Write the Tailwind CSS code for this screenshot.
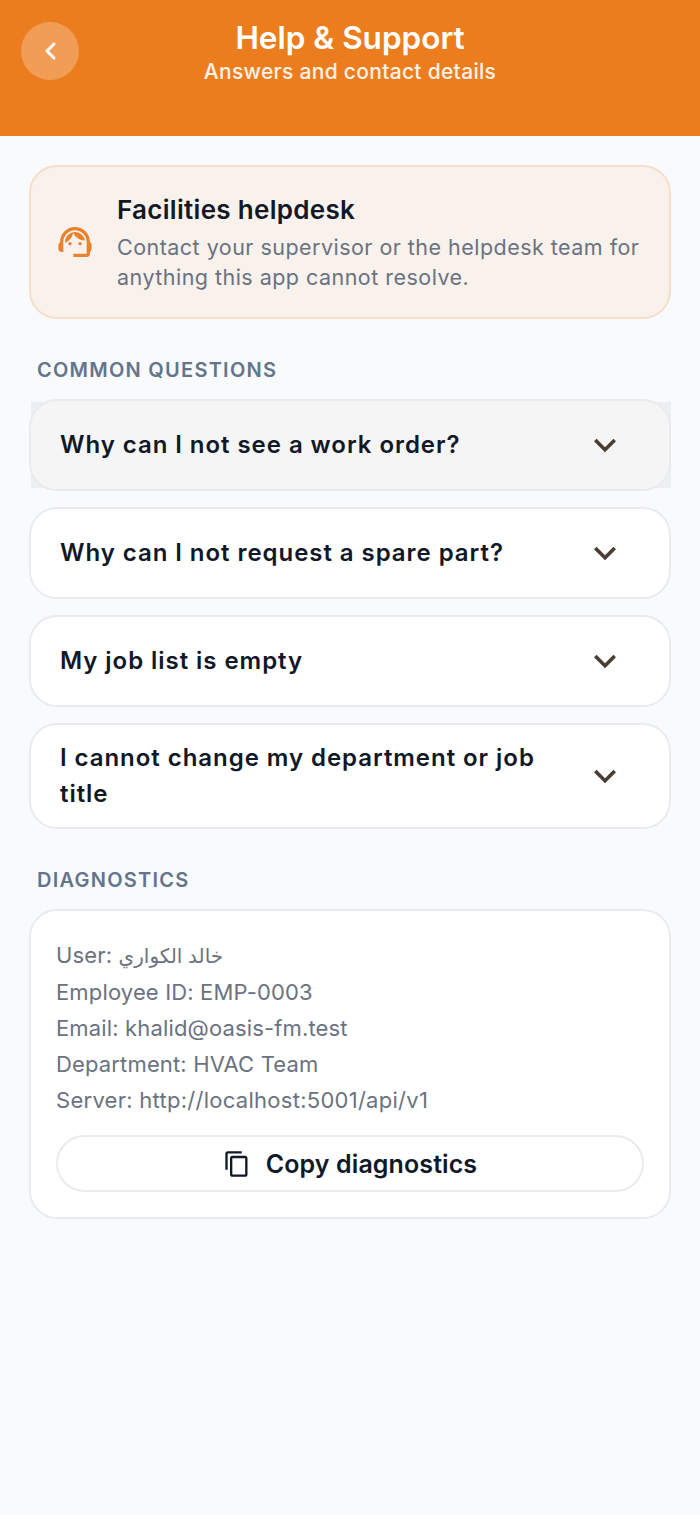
<!DOCTYPE html>
<html lang="en">
<head>
  <meta charset="UTF-8">
  <title>Help & Support</title>
  <meta name="viewport" content="width=device-width, initial-scale=1">
  <script src="https://cdn.jsdelivr.net/npm/@tailwindcss/browser@4"></script>
</head>
<body class="bg-[#f9fafc] font-['Inter','DejaVu_Sans',sans-serif]">
  <div class="w-[700px] h-[1515px] overflow-hidden">

    <header class="h-[136px] bg-[#ec7d1e] relative pt-[19px] text-center text-white">
      <button class="absolute left-[21px] top-[22px] w-[58px] h-[58px] rounded-full bg-white/25 flex items-center justify-center">
        <svg width="14" height="20" viewBox="0 0 14 20" fill="none" stroke="white" stroke-width="3" stroke-linecap="round" stroke-linejoin="round"><path d="M11 3 L4 10 L11 17"/></svg>
      </button>
      <h1 class="text-[31.5px] leading-[38px] font-semibold">Help &amp; Support</h1>
      <p class="mt-[1px] text-[21px] leading-[28px] font-medium tracking-[0.3px] text-white/90">Answers and contact details</p>
    </header>

    <main class="px-[29px] pt-[29px]">
      <section class="h-[154px] rounded-[28px] border-2 border-[#f7dec8] bg-[#f8f1ec] flex items-center pl-[24px] pr-[20px] gap-[22px]">
        <svg class="w-[40px] h-[40px] shrink-0" viewBox="0 0 24 24" fill="#e9822c">
          <path d="M21 12.22C21 6.73 16.74 3 12 3c-4.69 0-9 3.65-9 9.28-.6.34-1 .98-1 1.72v2c0 1.1.9 2 2 2h1v-6.1c0-3.87 3.13-7 7-7s7 3.13 7 7V19h-8v2h8c1.1 0 2-.9 2-2v-1.22c.59-.31 1-.92 1-1.64v-2.3c0-.7-.41-1.31-1-1.62z"/>
          <circle cx="9" cy="13" r="1"/>
          <circle cx="15" cy="13" r="1"/>
          <path d="M18 11.03C17.52 8.18 15.04 6 12.05 6c-3.03 0-6.29 2.51-6.03 6.45 2.47-1.01 4.33-3.21 4.86-5.89 1.31 2.63 4 4.44 7.12 4.47z"/>
        </svg>
        <div>
          <h2 class="text-[26px] leading-[34px] font-semibold tracking-[0.3px] text-[#111827]">Facilities helpdesk</h2>
          <p class="mt-[5px] text-[21.5px] leading-[30px] tracking-[0.47px] text-[#6b7280]">Contact your supervisor or the helpdesk team for anything this app cannot resolve.</p>
        </div>
      </section>

      <h3 class="mt-[38px] ml-[8px] text-[20px] leading-[26px] font-semibold tracking-[1.25px] text-[#64748b]">COMMON QUESTIONS</h3>

      <div class="mt-[16px] flex flex-col gap-[16px]">
        <div class="relative">
          <div class="absolute left-[2px] right-0 top-[3px] bottom-[3px] bg-[#eeeff1]"></div>
          <div class="relative h-[92px] rounded-[28px] border-2 border-[#e9ebef] bg-[#f5f5f6] flex items-center justify-between pl-[29px] pr-[42px]">
            <span class="text-[24px] leading-[36px] font-[580] tracking-[0.95px] text-[#111827]">Why can I not see a work order?</span>
            <svg class="w-[44px] h-[44px] shrink-0" viewBox="0 0 24 24" fill="#4a3d32"><path d="M16.59 8.59L12 13.17 7.41 8.59 6 10l6 6 6-6z"/></svg>
          </div>
        </div>
        <div class="h-[92px] rounded-[28px] border-2 border-[#e9ebef] bg-white flex items-center justify-between pl-[29px] pr-[42px]">
          <span class="text-[24px] leading-[36px] font-[580] tracking-[0.95px] text-[#111827]">Why can I not request a spare part?</span>
          <svg class="w-[44px] h-[44px] shrink-0" viewBox="0 0 24 24" fill="#4a3d32"><path d="M16.59 8.59L12 13.17 7.41 8.59 6 10l6 6 6-6z"/></svg>
        </div>
        <div class="h-[92px] rounded-[28px] border-2 border-[#e9ebef] bg-white flex items-center justify-between pl-[29px] pr-[42px]">
          <span class="text-[24px] leading-[36px] font-[580] tracking-[0.95px] text-[#111827]">My job list is empty</span>
          <svg class="w-[44px] h-[44px] shrink-0" viewBox="0 0 24 24" fill="#4a3d32"><path d="M16.59 8.59L12 13.17 7.41 8.59 6 10l6 6 6-6z"/></svg>
        </div>
        <div class="h-[106px] rounded-[28px] border-2 border-[#e9ebef] bg-white flex items-center justify-between pl-[29px] pr-[42px]">
          <span class="w-[500px] text-[24px] leading-[36px] font-[580] tracking-[0.95px] text-[#111827]">I cannot change my department or job title</span>
          <svg class="w-[44px] h-[44px] shrink-0" viewBox="0 0 24 24" fill="#4a3d32"><path d="M16.59 8.59L12 13.17 7.41 8.59 6 10l6 6 6-6z"/></svg>
        </div>
      </div>

      <h3 class="mt-[38px] ml-[8px] text-[20px] leading-[26px] font-semibold tracking-[1.25px] text-[#64748b]">DIAGNOSTICS</h3>

      <section class="mt-[16px] h-[310px] rounded-[28px] border-2 border-[#e9ebef] bg-white pt-[26px] px-[25px]">
        <div class="text-[22px] leading-[36px] tracking-[0.15px] text-[#6b7280]">
          <p>User: <span class="text-[20px]">خالد الكواري</span></p>
          <p>Employee ID: EMP-0003</p>
          <p>Email: khalid@oasis-fm.test</p>
          <p>Department: HVAC Team</p>
          <p class="tracking-[0.27px]">Server: http://localhost:5001/api/v1</p>
        </div>
        <button class="mt-[17px] w-full h-[57px] rounded-full border-2 border-[#e9ebef] flex items-center justify-center gap-[15px] text-[25px] leading-[38px] font-semibold tracking-[0.1px] text-[#111827]">
          <svg class="w-[28px] h-[28px]" viewBox="0 0 24 24" fill="#111827"><path d="M16 1H4c-1.1 0-2 .9-2 2v14h2V3h12V1zm3 4H8c-1.1 0-2 .9-2 2v14c0 1.1.9 2 2 2h11c1.1 0 2-.9 2-2V7c0-1.1-.9-2-2-2zm0 16H8V7h11v14z"/></svg>
          Copy diagnostics
        </button>
      </section>
    </main>
  </div>
</body>
</html>
